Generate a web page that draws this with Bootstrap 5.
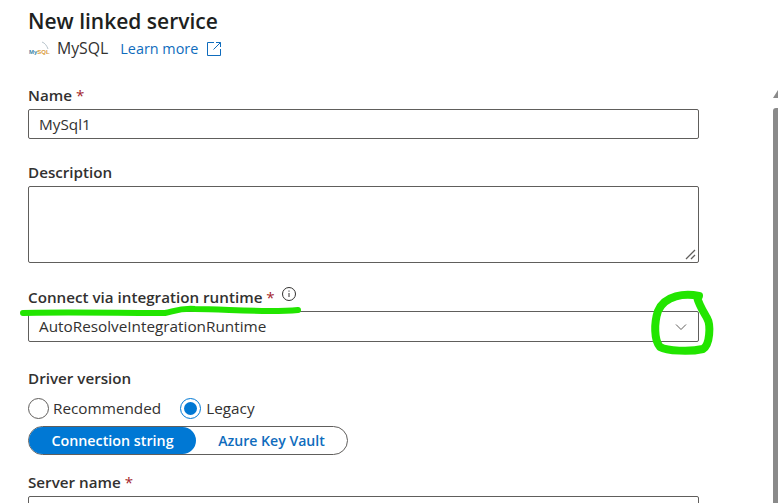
<!DOCTYPE html>
<html lang="en">
<head>
  <meta charset="UTF-8" />
  <title>New linked service</title>
  <link href="https://cdn.jsdelivr.net/npm/bootstrap@5.3.0/dist/css/bootstrap.min.css" rel="stylesheet"/>
  <style>
    html, body { height: 503px; overflow: hidden; }
    body {
      font-family: "Open Sans", "Noto Sans", sans-serif;
      font-size: 15.3px;
      color: #323130;
      background: #fff;
      position: relative;
    }
    .pane { width: 671px; margin-left: 28px; padding-top: 7px; }
    .pane-title { font-size: 21px; font-weight: 600; line-height: 28px; margin: 0; color: #201f1e; }
    .sub-row { height: 24px; margin-top: 2px; }
    .sub-row a { color: #0f6cbd; text-decoration: none; font-size: 14.4px; margin-left: 12px; }
    .sub-name { margin-left: 5px; font-size: 15.8px; }
    .field-label { font-weight: 600; font-size: 15.2px; line-height: 20px; margin: 0; color: #323130; }
    .gap-name { margin-top: 24px; }
    .gap-desc { margin-top: 23px; }
    .gap-conn { margin-top: 24px; }
    .gap-driver { margin-top: 26px; }
    .gap-server { margin-top: 17px; }
    .req { color: #a4262c; font-weight: 400; }
    .field-box {
      border: 1px solid #605e5c;
      border-radius: 2px;
      padding: 0 10px;
      color: #323130;
      background: #fff;
    }
    .box-name { height: 30px; margin-top: 4px; }
    .box-desc { height: 77px; margin-top: 4px; position: relative; }
    .box-select { height: 31px; margin-top: 4px; }
    .grip { position: absolute; right: 1px; bottom: 1px; }
    .chevron { margin-right: 1px; }
    .info-mark { margin-left: 6px; }
    .radio-row { height: 24px; margin-top: 8px; }
    .radio-dot { width: 21px; height: 21px; border: 1px solid #605e5c; border-radius: 50%; }
    .radio-dot.on { border-color: #0078d4; }
    .radio-dot.on::after { content: ""; width: 13px; height: 13px; border-radius: 50%; background: #0078d4; }
    .opt-first { margin-left: 4px; margin-right: 19px; }
    .opt-second { margin-left: 5px; }
    .toggle-wrap { width: 320px; height: 29px; margin-top: 6px; border: 1px solid #605e5c; border-radius: 15px; }
    .toggle-on { width: 167px; background: #0078d4; color: #fff; font-weight: 600; border-radius: 15px; font-size: 14.3px; }
    .toggle-off { color: #0f6cbd; font-weight: 600; font-size: 14.1px; }
    .logo-word { font-size: 6px; font-weight: 700; font-family: "Liberation Sans", sans-serif; }
    .vbar { position: absolute; top: 86px; right: 0; bottom: 0; width: 5px; background: #fff; }
    .vbar-arrow { position: absolute; top: 4px; left: 0; width: 0; height: 0; border-left: 5px solid transparent; border-bottom: 8px solid #8a8a8a; }
    .vbar-thumb { position: absolute; top: 22px; left: 0; right: 0; bottom: 0; background: #8a8a8a; border-top-left-radius: 3px; }
    .ink { position: absolute; left: 0; top: 0; pointer-events: none; }
  </style>
</head>
<body>

  <div class="pane">
    <h1 class="pane-title">New linked service</h1>
    <div class="sub-row d-flex align-items-center">
      <svg width="24" height="16" viewBox="0 0 24 16" class="flex-shrink-0">
        <path d="M14 1c3 1 5 4 6 7" fill="none" stroke="#b8c4cc" stroke-width="1"/>
        <text x="1" y="13" class="logo-word" fill="#3f86a8">My<tspan fill="#d99a3a">SQL</tspan></text>
      </svg>
      <span class="sub-name">MySQL</span>
      <a href="#">Learn more</a>
      <svg width="16" height="16" viewBox="0 0 16 16" class="ms-2" fill="none" stroke="#0f6cbd" stroke-width="1">
        <path d="M8 1.500H1.500v13h13V8M10 1.500h4.500V6M14.500 1.500 7.500 8.500"/>
      </svg>
    </div>

    <div class="field-label gap-name">Name <span class="req">*</span></div>
    <div class="field-box box-name d-flex align-items-center">MySql1</div>

    <div class="field-label gap-desc">Description</div>
    <div class="field-box box-desc">
      <svg class="grip" width="12" height="12" viewBox="0 0 12 12" stroke="#605e5c" stroke-width="1.300">
        <path d="M1 10 10 1M6 10l4-4"/>
      </svg>
    </div>

    <div class="d-flex align-items-start field-label gap-conn">
      <span>Connect via integration runtime <span class="req">*</span></span>
      <svg width="16" height="16" viewBox="0 0 16 16" class="info-mark" fill="none" stroke="#323130">
        <circle cx="8" cy="7" r="6.500"/>
        <path d="M8 6v4M8 3.500v1.200"/>
      </svg>
    </div>
    <div class="field-box box-select d-flex align-items-center justify-content-between">
      <span>AutoResolveIntegrationRuntime</span>
      <svg width="12" height="8" viewBox="0 0 12 8" class="chevron" fill="none" stroke="#605e5c">
        <path d="M1 1.500 6 6.500l5-5"/>
      </svg>
    </div>

    <div class="field-label gap-driver">Driver version</div>
    <div class="radio-row d-flex align-items-center">
      <span class="radio-dot d-flex"></span>
      <span class="opt-first">Recommended</span>
      <span class="radio-dot on d-flex align-items-center justify-content-center"></span>
      <span class="opt-second">Legacy</span>
    </div>
    <div class="toggle-wrap d-flex">
      <div class="toggle-on d-flex align-items-center justify-content-center">Connection string</div>
      <div class="toggle-off flex-grow-1 d-flex align-items-center justify-content-center">Azure Key Vault</div>
    </div>

    <div class="field-label gap-server">Server name <span class="req">*</span></div>
    <div class="field-box box-name"></div>
  </div>

  <div class="vbar"><div class="vbar-arrow"></div><div class="vbar-thumb"></div></div>

  <svg class="ink" width="778" height="503" fill="none" stroke="#22e500" stroke-linecap="round" stroke-linejoin="round">
    <path d="M23 313C60 312 120 313 165 313C175 311 180 308 195 309C225 309 265 313 298 310" stroke-width="6"/>
    <path d="M699 296C685 293 665 295 658 311C654 323 654 340 660 347C667 351 690 352 703 349C710 345 711 325 707 318C703 311 699 305 697 297" stroke-width="8"/>
  </svg>

</body>
</html>
